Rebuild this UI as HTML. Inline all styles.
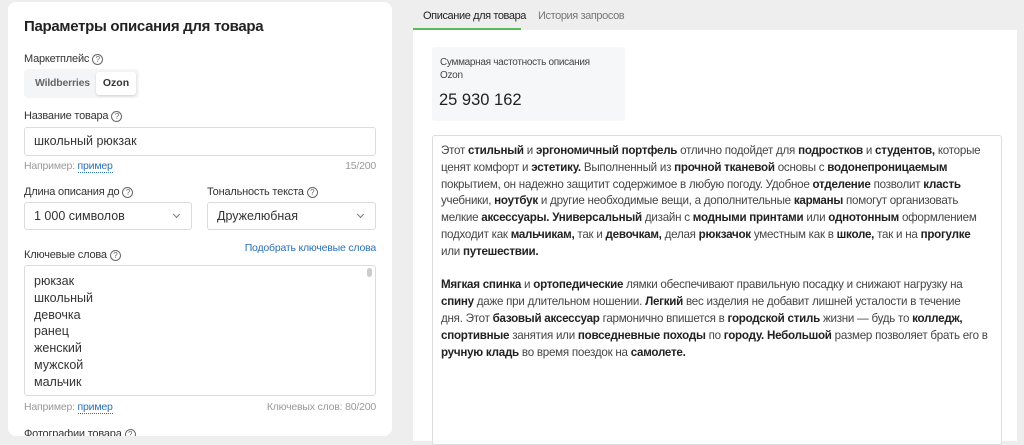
<!DOCTYPE html>
<html><head><meta charset="utf-8"><style>
*{box-sizing:border-box;margin:0;padding:0}
body{width:1024px;height:441px;overflow:hidden;background:#eeeeee;font-family:"Liberation Sans",sans-serif;color:#222;position:relative}
.abs{position:absolute}
.card{left:8px;top:2px;width:384px;height:434px;background:#fff;border-radius:8px}
.lbl{font-size:11px;color:#333;white-space:nowrap;letter-spacing:-0.2px}
.q{display:inline-block;width:11px;height:11px;border:1px solid #666;border-radius:50%;font-size:8px;text-align:center;line-height:9px;color:#666;vertical-align:0px;margin-left:3px}
.inp{border:1px solid #dcdcdc;border-radius:3px;background:#fff;font-size:12.5px;color:#333;padding-left:9px;white-space:nowrap}
.hint{font-size:10.5px;color:#999;white-space:nowrap;letter-spacing:-0.2px}
.hint a{color:#2a6fb8;text-decoration:none;border-bottom:1px dotted #2a6fb8}
.chev{position:absolute;right:12px;top:9px;width:5px;height:5px;border-right:1px solid #777;border-bottom:1px solid #777;transform:rotate(45deg)}
.desc{font-size:11.6px;line-height:16.8px;color:#444;white-space:nowrap;letter-spacing:-0.25px}
.desc b{color:#222}
</style></head><body>
<div class="abs card"></div>
<div class="abs" style="left:24px;top:18px;font-size:15px;font-weight:bold;color:#222;white-space:nowrap;letter-spacing:-0.3px">Параметры описания для товара</div>
<div class="abs lbl" style="left:24px;top:53px">Маркетплейс<span class="q">?</span></div>
<div class="abs" style="left:24px;top:69px;width:115px;height:29px;background:#f4f5f7;border-radius:4px"></div>
<div class="abs" style="left:35px;top:77px;font-size:10.5px;font-weight:bold;color:#666;letter-spacing:-0.2px">Wildberries</div>
<div class="abs" style="left:96px;top:72px;width:40px;height:23px;background:#fff;border-radius:3px;box-shadow:0 1px 2px rgba(0,0,0,.15);font-size:10.5px;font-weight:bold;text-align:center;line-height:23px;color:#333">Ozon</div>
<div class="abs lbl" style="left:24px;top:110px">Название товара<span class="q">?</span></div>
<div class="abs inp" style="left:24px;top:127px;width:352px;height:29px;line-height:27px">школьный рюкзак</div>
<div class="abs hint" style="left:24px;top:160px">Например: <a>пример</a></div>
<div class="abs hint" style="right:648px;top:160px">15/200</div>
<div class="abs lbl" style="left:24px;top:186px">Длина описания до<span class="q">?</span></div>
<div class="abs lbl" style="left:207px;top:186px">Тональность текста<span class="q">?</span></div>
<div class="abs inp" style="left:24px;top:202px;width:168px;height:28px;line-height:26px">1 000 символов<span class="chev"></span></div>
<div class="abs inp" style="left:207px;top:202px;width:169px;height:28px;line-height:26px">Дружелюбная<span class="chev"></span></div>
<div class="abs" style="right:648px;top:242px;font-size:10.5px;color:#2a6fb8;white-space:nowrap;letter-spacing:-0.2px">Подобрать ключевые слова</div>
<div class="abs lbl" style="left:24px;top:249px">Ключевые слова<span class="q">?</span></div>
<div class="abs inp" style="left:24px;top:265px;width:352px;height:131px;padding-left:9px;padding-top:7px;line-height:16.8px">рюкзак<br>школьный<br>девочка<br>ранец<br>женский<br>мужской<br>мальчик</div>
<div class="abs" style="left:367px;top:268px;width:5px;height:9px;background:#ccc;border-radius:3px"></div>
<div class="abs hint" style="left:24px;top:401px">Например: <a>пример</a></div>
<div class="abs hint" style="right:648px;top:401px">Ключевых слов: 80/200</div>
<div class="abs lbl" style="left:24px;top:428px">Фотографии товара<span class="q">?</span></div>
<div class="abs" style="left:0;top:436px;width:1024px;height:5px;background:#eeeeee"></div>

<div class="abs" style="left:413px;top:30px;width:604px;height:411px;background:#fff"></div>
<div class="abs" style="left:413px;top:28px;width:108px;height:2px;background:#5cb85c"></div>
<div class="abs" style="left:423px;top:10px;font-size:11px;color:#222;white-space:nowrap;letter-spacing:-0.4px">Описание для товара</div>
<div class="abs" style="left:538px;top:10px;font-size:11px;color:#777;white-space:nowrap;letter-spacing:-0.4px">История запросов</div>
<div class="abs" style="left:432px;top:47px;width:193px;height:74px;background:#f6f7f9;border-radius:3px"></div>
<div class="abs" style="left:440px;top:56px;font-size:10px;color:#444;line-height:13px;white-space:nowrap;letter-spacing:-0.3px">Суммарная частотность описания<br>Ozon</div>
<div class="abs" style="left:439px;top:91px;font-size:16.5px;color:#222">25 930 162</div>
<div class="abs" style="left:432px;top:135px;width:570px;height:310px;border:1px solid #ddd;border-radius:3px;background:#fff"></div>
<div class="abs desc" style="left:441px;top:143px">Этот <b>стильный</b> и <b>эргономичный портфель</b> отлично подойдет для <b>подростков</b> и <b>студентов,</b> которые<br>ценят комфорт и <b>эстетику.</b> Выполненный из <b>прочной тканевой</b> основы с <b>водонепроницаемым</b><br>покрытием, он надежно защитит содержимое в любую погоду. Удобное <b>отделение</b> позволит <b>класть</b><br>учебники, <b>ноутбук</b> и другие необходимые вещи, а дополнительные <b>карманы</b> помогут организовать<br>мелкие <b>аксессуары.</b> <b>Универсальный</b> дизайн с <b>модными принтами</b> или <b>однотонным</b> оформлением<br>подходит как <b>мальчикам,</b> так и <b>девочкам,</b> делая <b>рюкзачок</b> уместным как в <b>школе,</b> так и на <b>прогулке</b><br>или <b>путешествии.</b><br><br><b>Мягкая спинка</b> и <b>ортопедические</b> лямки обеспечивают правильную посадку и снижают нагрузку на<br><b>спину</b> даже при длительном ношении. <b>Легкий</b> вес изделия не добавит лишней усталости в течение<br>дня. Этот <b>базовый аксессуар</b> гармонично впишется в <b>городской стиль</b> жизни — будь то <b>колледж,</b><br><b>спортивные</b> занятия или <b>повседневные походы</b> по <b>городу.</b> <b>Небольшой</b> размер позволяет брать его в<br><b>ручную кладь</b> во время поездок на <b>самолете.</b></div>
</body></html>
